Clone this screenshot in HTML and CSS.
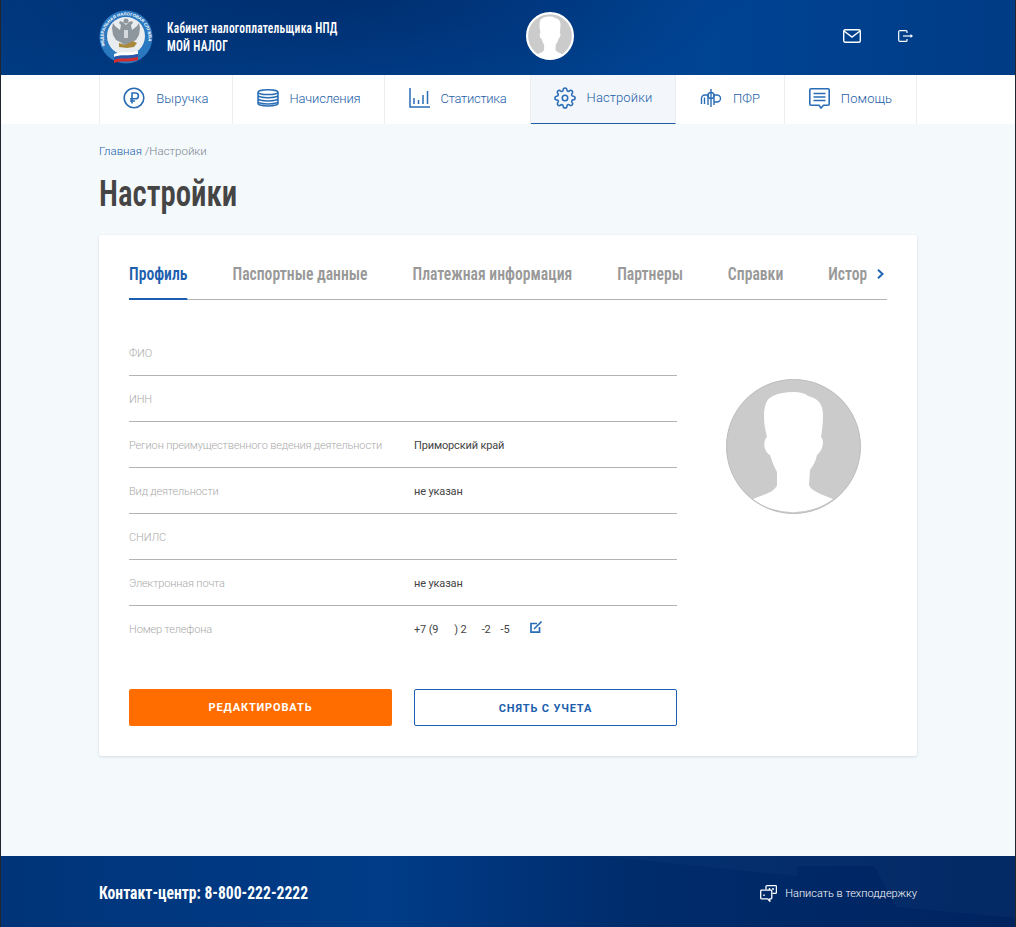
FILE: index.html
```html
<!DOCTYPE html>
<html lang="ru">
<head>
<meta charset="utf-8">
<title>Настройки</title>
<link rel="stylesheet" href="styles.css">
</head>
<body>
<div class="page">
  <header class="header">
    <div class="wrap header-in">
      <div class="brand">
        <svg class="emblem" width="54" height="54" viewBox="0 0 54 54">
          <defs><path id="ring" d="M6 36 A22.500 22.500 0 1 1 48 36"/></defs>
          <circle cx="27" cy="27" r="26.500" fill="#2a78c0"/>
          <circle cx="27" cy="26" r="19" fill="#e9edf0"/>
          <text class="ring-text"><textPath href="#ring">ФЕДЕРАЛЬНАЯ НАЛОГОВАЯ СЛУЖБА</textPath></text>
          <g fill="#8f979e">
            <path id="wing" d="M27 15L24 12L21 11L20 13L22 15L21 20L16 16L14 13L13 18L14 25L17 30L21 32L24 34L27 36Z"/>
            <path d="M27 15L30 12L33 11L34 13L32 15L33 20L38 16L40 13L41 18L40 25L37 30L33 32L30 34L27 36Z"/>
            <circle cx="27" cy="11" r="2.500"/>
          </g>
          <path d="M25 20h4v8h-4z" fill="#d6dade"/>
          <path d="M20 33l6 2 8-4 4 2-3 4-7 1-8-1z" fill="#a98a3c"/>
          <path d="M15 44c6-3 12 0 24-3v3c-10 3-18 0-24 3z" fill="#fff"/>
          <path d="M15 47c6-3 14 0 24-3v3c-10 3-18 0-24 3z" fill="#2d56a8"/>
          <path d="M15 50c6-3 14 0 24-3v3c-10 3-18 0-24 3z" fill="#d62b2b"/>
        </svg>
        <div class="brand-text">
          <div>Кабинет налогоплательщика НПД</div>
          <div class="brand-name">МОЙ НАЛОГ</div>
        </div>
      </div>
      <svg class="head-avatar" width="48" height="48" viewBox="0 0 135 135">
        <circle cx="67.500" cy="67.500" r="64.500" fill="#cbcbcb" stroke="#fff" stroke-width="6"/>
        <path d="M67 13C73 13 79 14 82 17C91 19 97 24 97 36C97 44 96 52 95 58C98 60 98 70 91 76C90 82 87 87 84 91L83 106C85 112 97 116 107 120A67 67 0 0 1 27 120C37 116 49 113 51 106L51 93C48 88 46 82 44 76C37 72 37 61 41 58C39 50 38 44 38 38C38 24 42 19 47 17C53 14 60 13 67 13Z" fill="#fff"/>
      </svg>
      <div class="head-actions">
        <svg width="18" height="14" viewBox="0 0 18 14" fill="none" stroke="#fff" stroke-width="1.400"><rect x=".7" y=".7" width="16.600" height="12.600" rx="1.500"/><path d="M1 2l8 6 8-6"/></svg>
        <svg width="16" height="12" viewBox="0 0 16 12" fill="none" stroke="#fff" stroke-width="1.200"><path d="M9 3V1.500C9 1 8.500.6 8 .6H2C1.300.6.700 1 .7 1.800v8.400c0 .8.600 1.200 1.300 1.200h6c.5 0 1-.4 1-.9V9"/><path d="M5 6h8"/><path d="M12.500 4l2.500 2-2.500 2z" fill="#fff" stroke="none"/></svg>
      </div>
    </div>
  </header>

  <nav class="nav">
    <div class="wrap nav-in">
      <a class="nav-item n1">
        <svg width="22" height="22" viewBox="0 0 22 22" fill="none" stroke="#2a6db5" stroke-width="1.600"><circle cx="11" cy="11" r="9.800"/><path d="M9 16.500V6h3.500a2.800 2.800 0 0 1 0 5.800H7M7 14h5"/></svg>
        <span>Выручка</span>
      </a>
      <a class="nav-item n2">
        <svg width="22" height="18" viewBox="0 0 22 18" fill="none" stroke="#2a6db5" stroke-width="1.500"><ellipse cx="11" cy="3.200" rx="10" ry="2.400"/><path d="M1 3.500v2.800c0 1.300 4.500 2.400 10 2.400s10-1.100 10-2.400V3.500M1 6.500v3c0 1.300 4.500 2.400 10 2.400s10-1.100 10-2.400v-3M1 9.500v3c0 1.300 4.500 2.400 10 2.400s10-1.100 10-2.400v-3M1 12.500v2c0 1.300 4.500 2.400 10 2.400s10-1.100 10-2.400v-2"/></svg>
        <span>Начисления</span>
      </a>
      <a class="nav-item n3">
        <svg width="21" height="20" viewBox="0 0 21 20" fill="none" stroke="#2a6db5" stroke-width="1.500"><path d="M1 0v19h20"/><path d="M5 10v6M9.500 12v4M14 7v9M18.500 3v13"/></svg>
        <span>Статистика</span>
      </a>
      <a class="nav-item n4 active">
        <svg width="22" height="22" viewBox="0 0 24 24" fill="none" stroke="#2a6db5" stroke-width="1.700"><circle cx="12" cy="12" r="3"/><path d="M19.400 15a1.650 1.650 0 0 0 .33 1.820l.06.06a2 2 0 0 1 0 2.830 2 2 0 0 1-2.830 0l-.06-.06a1.650 1.650 0 0 0-1.820-.33 1.650 1.650 0 0 0-1 1.510V21a2 2 0 0 1-2 2 2 2 0 0 1-2-2v-.09A1.650 1.650 0 0 0 9 19.400a1.650 1.650 0 0 0-1.820.33l-.06.06a2 2 0 0 1-2.830 0 2 2 0 0 1 0-2.830l.06-.06a1.650 1.650 0 0 0 .33-1.820 1.650 1.650 0 0 0-1.510-1H3a2 2 0 0 1-2-2 2 2 0 0 1 2-2h.09A1.650 1.650 0 0 0 4.600 9a1.650 1.650 0 0 0-.33-1.820l-.06-.06a2 2 0 0 1 0-2.830 2 2 0 0 1 2.830 0l.06.06a1.650 1.650 0 0 0 1.820.33H9a1.650 1.650 0 0 0 1-1.510V3a2 2 0 0 1 2-2 2 2 0 0 1 2 2v.09a1.650 1.650 0 0 0 1 1.510 1.650 1.650 0 0 0 1.820-.33l.06-.06a2 2 0 0 1 2.830 0 2 2 0 0 1 0 2.830l-.06.06a1.650 1.650 0 0 0-.33 1.820V9a1.650 1.650 0 0 0 1.510 1H21a2 2 0 0 1 2 2 2 2 0 0 1-2 2h-.09a1.650 1.650 0 0 0-1.510 1z"/></svg>
        <span>Настройки</span>
      </a>
      <a class="nav-item n5">
        <svg width="22" height="18" viewBox="0 0 22 18" fill="none" stroke="#2a6db5" stroke-width="1.400"><path d="M11 0v18M8 6v10M14 6v10"/><circle cx="11" cy="6.500" r="3"/><path d="M1.500 15V9.500A3.500 3.500 0 0 1 5 6h3M4.500 8.500V15M20.500 9.500A3.500 3.500 0 0 0 17 6h-3M20.500 9.500A3.500 3.500 0 0 1 17 13h-3"/></svg>
        <span>ПФР</span>
      </a>
      <a class="nav-item n6">
        <svg width="21" height="21" viewBox="0 0 21 21" fill="none" stroke="#2a6db5" stroke-width="1.600"><path d="M2 .8h17c.7 0 1.200.5 1.200 1.200v14c0 .7-.5 1.200-1.200 1.200h-4.500L12 20l-2-2.800H2c-.7 0-1.200-.5-1.200-1.200V2C.8 1.300 1.300.8 2 .8z"/><path d="M4.500 5.500h12M4.500 9h12M4.500 12.500h12"/></svg>
        <span>Помощь</span>
      </a>
    </div>
  </nav>

  <main class="main wrap">
    <div class="crumbs"><a class="crumb-link">Главная</a> <span>/</span><span>Настройки</span></div>
    <h1 class="title">Настройки</h1>

    <section class="card">
      <div class="tabs">
        <div class="tab-strip">
          <a class="tab current">Профиль</a>
          <a class="tab">Паспортные данные</a>
          <a class="tab">Платежная информация</a>
          <a class="tab">Партнеры</a>
          <a class="tab">Справки</a>
          <a class="tab">История</a>
        </div>
        <svg class="tab-next" width="7" height="10" viewBox="0 0 7 10" fill="none" stroke="#1f66b5" stroke-width="2"><path d="M1 .8L5.500 5 1 9.200"/></svg>
      </div>

      <div class="profile">
        <div class="form">
          <div class="row"><span class="label">ФИО</span></div>
          <div class="row"><span class="label">ИНН</span></div>
          <div class="row"><span class="label">Регион преимущественного ведения деятельности</span><span class="value">Приморский край</span></div>
          <div class="row"><span class="label">Вид деятельности</span><span class="value">не указан</span></div>
          <div class="row"><span class="label">СНИЛС</span></div>
          <div class="row"><span class="label">Электронная почта</span><span class="value">не указан</span></div>
          <div class="row last"><span class="label">Номер телефона</span>
            <span class="value phone"><span>+7 (9</span><span class="gap1">) 2</span><span class="gap2">-2</span><span class="gap3">-5</span><svg class="edit" width="12" height="12" viewBox="0 0 12 12" fill="none" stroke="#2a6db5" stroke-width="1.700"><path d="M7 2.500H1v8.600h8.500V6"/><path d="M4 8L11.500.5" stroke-width="1.600"/></svg></span>
          </div>
          <div class="buttons">
            <a class="btn primary">РЕДАКТИРОВАТЬ</a>
            <a class="btn outline">СНЯТЬ С УЧЕТА</a>
          </div>
        </div>
        <svg class="avatar" width="135" height="135" viewBox="0 0 135 135">
          <circle cx="67.500" cy="67.500" r="67" fill="#cbcbcb"/>
          <path d="M67 13C73 13 79 14 82 17C91 19 97 24 97 36C97 44 96 52 95 58C98 60 98 70 91 76C90 82 87 87 84 91L83 106C85 112 97 116 107 120A67 67 0 0 1 27 120C37 116 49 113 51 106L51 93C48 88 46 82 44 76C37 72 37 61 41 58C39 50 38 44 38 38C38 24 42 19 47 17C53 14 60 13 67 13Z" fill="#fff"/>
          <circle cx="67.500" cy="67.500" r="67" fill="none" stroke="#bdbdbd"/>
        </svg>
      </div>
    </section>
  </main>

  <footer class="footer">
    <div class="wrap footer-in">
      <div class="contact">Контакт-центр: 8-800-222-2222</div>
      <a class="support">
        <svg width="17" height="17" viewBox="0 0 17 17" fill="none" stroke="#fff" stroke-width="1.300"><path d="M6 4.500V1.500C6 1 6.400.7 6.900.7h8.600c.5 0 .9.300.9.800v6c0 .5-.4.800-.9.800H12.500"/><path d="M1.500 5.200h9.500c.5 0 .8.300.8.800v7c0 .5-.3.800-.8.800h-1.200v2.500l-2-2.500H1.500c-.5 0-.8-.3-.8-.8V6c0-.5.300-.8.800-.8z"/><path d="M9.500 3v2M13 3v2M4 9.500v1.500" stroke-width="1.500"/></svg>
        <span>Написать в техподдержку</span>
      </a>
    </div>
  </footer>
</div>
</body>
</html>
```
FILE: styles.css
```css
* { box-sizing: border-box; }
html, body { margin: 0; padding: 0; }
body {
  background: #f4f9fc;
  font-family: Roboto, "Liberation Sans", sans-serif;
  color: #333;
}
.page {
  min-height: 927px;
  display: flex;
  flex-direction: column;
  border-left: 1px solid #20262e;
  border-right: 1px solid #20262e;
}
.wrap { width: 818px; margin: 0 auto; }

.header {
  height: 75px;
  background:
    radial-gradient(ellipse 420px 120px at 330px -10px, rgba(0, 32, 90, .55), rgba(0, 32, 90, 0)),
    linear-gradient(90deg, #003a80 0%, #00408c 50%, #004494 70%, #003b85 100%);
}
.header-in { height: 100%; display: flex; align-items: center; position: relative; }
.brand { display: flex; align-items: center; gap: 14px; width: 427px; }
.emblem { flex: none; margin-top: -1px; }
.ring-text { font: 700 4.300px "Liberation Sans", sans-serif; fill: #fff; }
.brand-text {
  font-family: Roboto, "Open Sans", sans-serif;
  font-stretch: 75%;
  font-weight: 600;
  font-size: 14px;
  line-height: 18px;
  letter-spacing: .3px;
  color: #fff;
  margin-top: -2px;
  white-space: nowrap;
  transform: scaleX(.82);
  transform-origin: left center;
}
.head-avatar { flex: none; margin-top: -3px; }
.head-actions { margin-left: auto; display: flex; align-items: center; gap: 37px; padding-right: 3px; margin-top: -3px; }

.nav { height: 49px; background: #fff; }
.nav-in { height: 49px; display: flex; border-left: 1px solid #eceff2; }
.nav-item {
  display: flex;
  align-items: center;
  justify-content: center;
  gap: 11px;
  padding-bottom: 3px;
  border-right: 1px solid #eceff2;
  color: #1d5ea8;
  font-size: 13px;
  font-weight: 300;
  letter-spacing: .1px;
}
.n1 { width: 133px; }
.n2 { width: 152px; letter-spacing: -.2px; }
.n3 { width: 146px; letter-spacing: -.3px; }
.n4 { width: 145px; }
.n5 { width: 109px; }
.n6 { width: 132px; }
.nav-item.active { background: #f3f7fc; border-bottom: 1px solid #1d5ea8; }

.main { flex: 1; }
.crumbs { padding-top: 20px; height: 35px; font-size: 11.500px; font-weight: 300; color: #7b858c; line-height: 15px; }
.crumb-link { color: #1d5ea8; }
.title {
  margin: 10px 0 0;
  height: 66px;
  font-family: Roboto, "Open Sans", sans-serif;
  font-stretch: 75%;
  font-size: 36px;
  line-height: 50px;
  font-weight: 600;
  color: #454545;
  transform: scaleX(.855);
  transform-origin: left center;
}
.card {
  height: 521px;
  background: #fff;
  border-radius: 3px;
  padding: 0 30px;
  box-shadow: 0 1px 3px rgba(60, 90, 120, .18);
}
.tabs {
  position: relative;
  height: 65px;
  border-bottom: 1px solid #b3b3b3;
}
.tab-strip {
  display: flex;
  gap: 51.700px;
  height: 65px;
  overflow: hidden;
  width: 848px;
  transform: scaleX(.87);
  transform-origin: left center;
}
.tab {
  flex: none;
  height: 65px;
  padding-top: 28px;
  font-family: Roboto, "Open Sans", sans-serif;
  font-stretch: 75%;
  font-size: 18px;
  line-height: 22px;
  font-weight: 600;
  color: #999;
}
.tab.current { color: #1d5fae; border-bottom: 2px solid #1d5fae; }
.tab-next { position: absolute; right: 3px; top: 34px; }

.profile { display: flex; }
.form { width: 548px; padding-top: 30px; }
.row {
  height: 46px;
  display: flex;
  align-items: center;
  padding-top: 1px;
  border-bottom: 1px solid #b3b3b3;
  font-size: 11px;
  letter-spacing: -.15px;
}
.row.last { border-bottom: 0; }
.label { width: 285px; color: #aaa; font-weight: 300; flex: none; }
.value { color: #444; }
.phone { display: flex; align-items: center; }
.gap1 { margin-left: 16px; }
.gap2 { margin-left: 15px; }
.gap3 { margin-left: 10px; }
.edit { margin-left: 20px; margin-top: -5px; }
.buttons { display: flex; justify-content: space-between; margin-top: 37px; }
.btn {
  width: 263px;
  height: 37px;
  display: flex;
  align-items: center;
  justify-content: center;
  border-radius: 2px;
  font-size: 11px;
  font-weight: 700;
  letter-spacing: .85px;
}
.btn.primary { background: #ff6d00; color: #fff; padding-bottom: 1px; }
.btn.outline { border: 1px solid #1d5fae; color: #1d5fae; padding-top: 1px; }
.avatar { flex: none; margin: 79px 0 0 49px; }

.footer {
  position: relative;
  height: 71px;
  background: linear-gradient(90deg, #003478 0%, #003c88 38%, #002c6c 62%, #00235f 100%);
}
.footer::before {
  content: "";
  position: absolute;
  inset: 0;
  background: rgba(40, 100, 150, .1);
  clip-path: polygon(600px 0, 796px 20px, 796px 10px, 873px 10px, 895px 51px, 100% 62px, 100% 0);
}
.footer-in { position: relative; height: 100%; display: flex; align-items: center; justify-content: space-between; }
.contact {
  font-family: Roboto, "Open Sans", sans-serif;
  font-stretch: 75%;
  font-weight: 700;
  font-size: 18px;
  color: #fff;
  margin-top: 1px;
  white-space: nowrap;
  transform: scaleX(.867);
  transform-origin: left center;
}
.support { display: flex; align-items: center; gap: 8px; color: #fff; font-size: 11px; font-weight: 300; margin-top: 3px; }
```
